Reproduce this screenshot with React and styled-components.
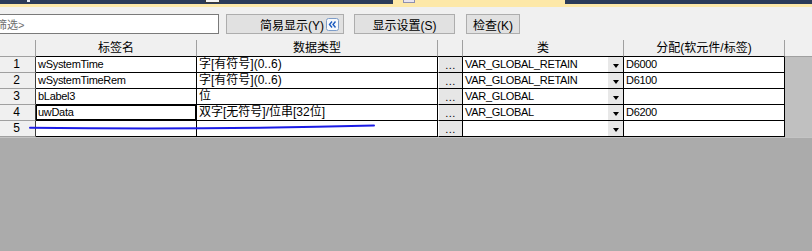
import React from "react";
import styled, { createGlobalStyle } from "styled-components";

const GlobalStyle = createGlobalStyle`
  html, body {
    margin: 0;
    padding: 0;
    background: #f0f0f0;
    font-family: "Liberation Sans", "Noto Sans CJK SC", sans-serif;
    overflow: hidden;
  }
`;

const Page = styled.div`
  display: flex;
  flex-direction: column;
  width: 812px;
  height: 251px;
  background: #f0f0f0;
  overflow: hidden;
`;

/* верхняя полоса вкладок */
const TabStrip = styled.div`
  display: flex;
  height: 4px;
  background: #2b3b58;
  border-bottom: 3px solid #fde8a8;
`;

const Seg = styled.div`
  flex: 0 0 ${(p) => p.$w}px;
  height: ${(p) => p.$h || 4}px;
  background: ${(p) => p.$bg || "transparent"};
  box-sizing: border-box;
  border: ${(p) => (p.$border ? `1px solid ${p.$border}` : "none")};
  border-top: none;
  display: flex;
  align-items: flex-start;
`;

const TabIcon = styled.span`
  width: 12px;
  height: 3px;
  margin-left: 10px;
  box-sizing: border-box;
  border: 1px solid #8d8fb0;
  border-top: none;
  background: #e8e4f0;
`;

/* панель инструментов */
const Toolbar = styled.div`
  display: flex;
  align-items: center;
  height: 33px;
  padding-top: 7px;
  padding-bottom: 6px;
  box-sizing: border-box;
`;

const FilterBox = styled.div`
  width: 221px;
  height: 20px;
  margin-left: -2px;
  box-sizing: border-box;
  border: 1px solid #7a7a7a;
  background: #fff;
  display: flex;
  align-items: center;
  overflow: hidden;
  font-size: 11px;
  color: #6d6d6d;
  white-space: nowrap;
  span {
    margin-left: -3px;
  }
`;

const Button = styled.button`
  width: ${(p) => p.$w}px;
  height: 20px;
  margin-left: ${(p) => p.$ml}px;
  padding: 0 ${(p) => (p.$icon ? 4 : 0)}px 0 0;
  box-sizing: border-box;
  border: 1px solid #adadad;
  background: #e1e1e1;
  display: flex;
  align-items: center;
  justify-content: ${(p) => (p.$icon ? "flex-end" : "center")};
  gap: 2px;
  font-family: "Liberation Sans", "Noto Sans CJK SC", sans-serif;
  font-size: 12px;
  color: #000;
`;

const CollapseIcon = () => (
  <svg width="13" height="13" viewBox="0 0 13 13">
    <rect x="0.5" y="0.5" width="12" height="12" rx="2" fill="#f7f9fc" stroke="#7d9cc8" />
    <path d="M6 3.5 L3.5 6.5 L6 9.5 M9.5 3.5 L7 6.5 L9.5 9.5" fill="none" stroke="#1d5cc0" strokeWidth="1.4" />
  </svg>
);

/* таблица */
const TableWrap = styled.div`
  position: relative;
`;

const Grid = styled.div`
  display: grid;
  grid-template-columns: 36px 161px 241px 25px 161px 161px 1fr;
  grid-template-rows: 17px repeat(5, 16px);
`;

const HeadCell = styled.div`
  box-sizing: border-box;
  background: #f0f0f0;
  border-right: 1px solid #a0a0a0;
  border-bottom: 1px solid ${(p) => (p.$num ? "#a0a0a0" : "#000")};
  font-size: 12px;
  line-height: 16px;
  text-align: center;
  color: #000;
  white-space: nowrap;
`;

const NumCell = styled.div`
  box-sizing: border-box;
  background: #f0f0f0;
  border-right: 1px solid #3c3c3c;
  border-bottom: 1px solid #a0a0a0;
  font-size: 12px;
  line-height: 15px;
  text-align: center;
  padding-right: 2px;
  color: #000;
`;

const Cell = styled.div`
  box-sizing: border-box;
  background: #fff;
  border-right: 1px solid #000;
  border-bottom: 1px solid #000;
  font-size: ${(p) => (p.$cjk ? 12 : 11)}px;
  letter-spacing: ${(p) => (p.$cjk ? 0 : -0.3)}px;
  line-height: 15px;
  padding-left: 2px;
  color: #000;
  white-space: nowrap;
  overflow: hidden;
  box-shadow: ${(p) => (p.$selected ? "inset 0 0 0 1px #000" : "none")};
`;

const DotsCell = styled.div`
  box-sizing: border-box;
  background: #e6e6e6;
  border-left: 1px solid #fff;
  border-right: 1px solid #000;
  border-bottom: 1px solid #000;
  font-size: 11px;
  line-height: 17px;
  text-align: center;
  color: #000;
  letter-spacing: 0.5px;
  overflow: hidden;
`;

const ClassCell = styled(Cell)`
  display: flex;
  justify-content: space-between;
  padding-right: 0;
`;

const DropBtn = styled.span`
  flex: 0 0 15px;
  height: 15px;
  background: #e8e8e8;
  display: flex;
  align-items: center;
  justify-content: center;
  &::after {
    content: "";
    margin-top: 2px;
    border-left: 3.5px solid transparent;
    border-right: 3.5px solid transparent;
    border-top: 4px solid #000;
  }
`;

const SideCell = styled.div`
  background: #c0c0c0;
`;

const Annotation = styled.svg`
  position: absolute;
  left: 0;
  top: 0;
  width: 100%;
  height: 100%;
  pointer-events: none;
`;

const Filler = styled.div`
  flex: 1;
  background: #ababab;
  border-top: 1px solid #c4c4c4;
`;

const rows = [
  { n: 1, label: "wSystemTime", type: "字[有符号](0..6)", cls: "VAR_GLOBAL_RETAIN", dev: "D6000" },
  { n: 2, label: "wSystemTimeRem", type: "字[有符号](0..6)", cls: "VAR_GLOBAL_RETAIN", dev: "D6100" },
  { n: 3, label: "bLabel3", type: "位", cls: "VAR_GLOBAL", dev: "" },
  { n: 4, label: "uwData", type: "双字[无符号]/位串[32位]", cls: "VAR_GLOBAL", dev: "D6200", selected: true },
  { n: 5, label: "", type: "", cls: "", dev: "" },
];

export default function App() {
  return (
    <Page>
      <GlobalStyle />
      <TabStrip>
        <Seg $w={27} />
        <Seg $w={3} $h={2} $bg="#e8ecf4" />
        <Seg $w={175} />
        <Seg $w={15} $h={3} $bg="#f4f4f4" $border="#3a3a3a" />
        <Seg $w={173} />
        <Seg $w={172} $bg="#fde8a8">
          <TabIcon />
        </Seg>
      </TabStrip>

      <Toolbar>
        <FilterBox>
          <span>筛选&gt;</span>
        </FilterBox>
        <Button $w={118} $ml={7} $icon>
          简易显示(Y)
          <CollapseIcon />
        </Button>
        <Button $w={101} $ml={10}>显示设置(S)</Button>
        <Button $w={54} $ml={11}>检查(K)</Button>
      </Toolbar>

      <TableWrap>
        <Grid>
          <HeadCell $num />
          <HeadCell>标签名</HeadCell>
          <HeadCell>数据类型</HeadCell>
          <HeadCell />
          <HeadCell>类</HeadCell>
          <HeadCell>分配(软元件/标签)</HeadCell>
          <HeadCell $num style={{ borderRight: "none" }} />

          {rows.map((r) => (
            <React.Fragment key={r.n}>
              <NumCell>{r.n}</NumCell>
              <Cell $selected={r.selected}>{r.label}</Cell>
              <Cell $cjk>{r.type}</Cell>
              <DotsCell>...</DotsCell>
              <ClassCell>
                <span>{r.cls}</span>
                <DropBtn />
              </ClassCell>
              <Cell>{r.dev}</Cell>
              <SideCell />
            </React.Fragment>
          ))}
        </Grid>
        <Annotation viewBox="0 0 812 97" preserveAspectRatio="none">
          <path d="M30 87.8 Q 200 90.2 374 85.6" fill="none" stroke="#1b1be6" strokeWidth="2" strokeLinecap="round" />
        </Annotation>
      </TableWrap>
      <Filler />
    </Page>
  );
}
